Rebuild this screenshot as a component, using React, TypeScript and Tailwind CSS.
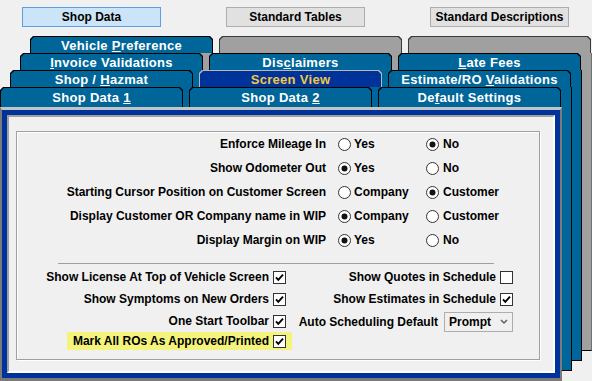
import React from "react";

const clip =
  "[clip-path:polygon(3px_0,calc(100%_-_3px)_0,100%_3px,100%_100%,0_100%,0_3px)]";

type Kind = "blue" | "gray" | "sel";

function Tab({
  children,
  kind = "blue",
  tall = false,
}: {
  children?: React.ReactNode;
  kind?: Kind;
  tall?: boolean;
}) {
  const outer =
    kind === "sel" ? "bg-[#b8b8b8]" : kind === "gray" ? "bg-[#3a3a3a]" : "bg-black";
  const inner =
    kind === "sel"
      ? "bg-[#003399] text-[#f2c744]"
      : kind === "gray"
      ? "bg-[#a0a0a0]"
      : "bg-[#006699] text-white";
  return (
    <div
      className={`${outer} ${clip} w-[183px] shrink-0 px-px pt-px ${
        tall ? "h-[20px]" : "h-[17px]"
      }`}
    >
      <div
        className={`${inner} ${clip} flex h-full items-center justify-center text-[13px] font-bold leading-none tracking-[0.3px]`}
      >
        <span className="whitespace-pre">{children}</span>
      </div>
    </div>
  );
}

function Radio({ checked }: { checked?: boolean }) {
  return (
    <svg width="13" height="13" viewBox="0 0 13 13" className="shrink-0">
      <circle cx="6.5" cy="6.5" r="6" fill="#fff" stroke="#333" strokeWidth="1" />
      {checked && <circle cx="6.5" cy="6.5" r="3" fill="#111" />}
    </svg>
  );
}

function Check({ checked }: { checked?: boolean }) {
  return (
    <div className="flex h-[13px] w-[13px] shrink-0 items-center justify-center border border-[#333] bg-white">
      {checked && (
        <svg width="11" height="11" viewBox="0 0 11 11">
          <path d="M2 5.3 L4.3 7.8 L9 2.6" fill="none" stroke="#000" strokeWidth="1.9" />
        </svg>
      )}
    </div>
  );
}

function RadioRow({
  label,
  a,
  b,
  sel,
}: {
  label: string;
  a: string;
  b: string;
  sel: 0 | 1;
}) {
  return (
    <div className="flex h-6 items-center">
      <div className="w-[309px] text-right">{label}</div>
      <div className="ml-[12px] flex w-[88px] items-center gap-[3px]">
        <Radio checked={sel === 0} />
        <span>{a}</span>
      </div>
      <div className="flex items-center gap-[4px]">
        <Radio checked={sel === 1} />
        <span>{b}</span>
      </div>
    </div>
  );
}

function CheckRow({ label, checked }: { label: string; checked?: boolean }) {
  return (
    <div className="flex h-[22px] items-center gap-[4px] pr-[6px]">
      <span>{label}</span>
      <Check checked={checked} />
    </div>
  );
}

export default function App() {
  return (
    <div className="h-[381px] w-[592px] overflow-hidden bg-[#f0f0f0] font-['Liberation_Sans',Arial,sans-serif] text-[12px] font-bold text-black">
      {/* top buttons */}
      <div className="flex gap-[65px] pl-[22px] pt-[7px]">
        <div className="flex h-[20px] w-[139px] items-center justify-center border border-[#5b9fe6] bg-[#cce4f7]">
          Shop Data
        </div>
        <div className="flex h-[20px] w-[139px] items-center justify-center border border-[#adadad] bg-[#e1e1e1]">
          Standard Tables
        </div>
        <div className="flex h-[20px] w-[139px] items-center justify-center border border-[#adadad] bg-[#e1e1e1]">
          Standard Descriptions
        </div>
      </div>

      {/* stacked tab pages */}
      <div className="relative mt-[9px] h-[345px] w-[592px]">
        {/* layer 1 (back) */}
        <div className="absolute left-[30px] top-0 flex h-[315px] w-[562px] flex-col">
          <div className="flex gap-[6px]">
            <Tab>
              Vehicle <u>P</u>reference
            </Tab>
            <Tab kind="gray" />
            <Tab kind="gray" />
          </div>
          <div className="flex-1 border-b border-r border-b-black border-r-[#707070] bg-[#a0a0a0]" />
        </div>

        {/* layer 2 */}
        <div className="absolute left-[20px] top-[17px] flex h-[308px] w-[562px] flex-col">
          <div className="flex gap-[6px]">
            <Tab>
              <u>I</u>nvoice Validations
            </Tab>
            <Tab>
              Dis<u>c</u>laimers
            </Tab>
            <Tab>
              <u>L</u>ate Fees
            </Tab>
          </div>
          <div className="flex-1 border-b border-r border-black bg-[#006699]" />
        </div>

        {/* layer 3 */}
        <div className="absolute left-[10px] top-[34px] flex h-[301px] w-[562px] flex-col">
          <div className="flex gap-[6px]">
            <Tab>
              Shop / <u>H</u>azmat
            </Tab>
            <Tab kind="sel">Screen View</Tab>
            <Tab>
              Estimate/RO <u>V</u>alidations
            </Tab>
          </div>
          <div className="flex-1 border-b border-r border-black bg-[#006699]" />
        </div>

        {/* layer 4 (front) */}
        <div className="absolute left-0 top-[51px] flex h-[294px] w-[562px] flex-col">
          <div className="flex gap-[6px]">
            <Tab tall>
              Shop Data <u>1</u>
            </Tab>
            <Tab tall>
              Shop Data <u>2</u>
            </Tab>
            <Tab tall>
              De<u>f</u>ault Settings
            </Tab>
          </div>
          <div className="flex flex-1 flex-col border-x-2 border-b-[3px] border-t-[3px] border-x-[#7a7a7a] border-b-[#7a7a7a] border-t-[#c4c4c4] bg-[#003399] p-[5px]">
            <div className="flex-1 border-2 border-b-white border-l-[#a0a0a0] border-r-white border-t-[#a0a0a0] bg-[#f0f0f0] pl-[7px] pt-[14px]">
              {/* group box */}
              <div className="flex h-[229px] w-[524px] flex-col border border-[#a0a0a0] shadow-[1px_1px_0_#fff,inset_1px_1px_0_#fff]">
                <RadioRow label="Enforce Mileage In" a="Yes" b="No" sel={1} />
                <RadioRow label="Show Odometer Out" a="Yes" b="No" sel={0} />
                <RadioRow
                  label="Starting Cursor Position on Customer Screen"
                  a="Company"
                  b="Customer"
                  sel={1}
                />
                <RadioRow
                  label="Display Customer OR Company name in WIP"
                  a="Company"
                  b="Customer"
                  sel={0}
                />
                <RadioRow label="Display Margin on WIP" a="Yes" b="No" sel={0} />

                <div className="ml-[41px] mt-[11px] h-px w-[436px] bg-[#a0a0a0]" />

                <div className="mt-[2px] flex">
                  <div className="flex w-[275px] flex-col items-end">
                    <CheckRow label="Show License At Top of Vehicle Screen" checked />
                    <CheckRow label="Show Symptoms on New Orders" checked />
                    <CheckRow label="One Start Toolbar" checked />
                    <div className="flex h-[18px] items-center gap-[4px] bg-[#f4f47c] px-[6px]">
                      <span>Mark All ROs As Approved/Printed</span>
                      <Check checked />
                    </div>
                  </div>
                  <div className="flex w-[221px] flex-col items-end">
                    <div className="flex h-[22px] items-center gap-[4px]">
                      <span>Show Quotes in Schedule</span>
                      <Check />
                    </div>
                    <div className="flex h-[22px] items-center gap-[4px]">
                      <span>Show Estimates in Schedule</span>
                      <Check checked />
                    </div>
                    <div className="flex h-[24px] items-center gap-[6px]">
                      <span>Auto Scheduling Default</span>
                      <div className="flex h-[20px] w-[69px] items-center justify-between border border-[#adadad] bg-[#f0f0f0] pl-[4px] pr-[4px]">
                        <span>Prompt</span>
                        <svg width="8" height="6" viewBox="0 0 8 6">
                          <path d="M1 1 L4 4 L7 1" fill="none" stroke="#606060" strokeWidth="1.5" />
                        </svg>
                      </div>
                    </div>
                  </div>
                </div>
              </div>
            </div>
          </div>
        </div>
      </div>
    </div>
  );
}
